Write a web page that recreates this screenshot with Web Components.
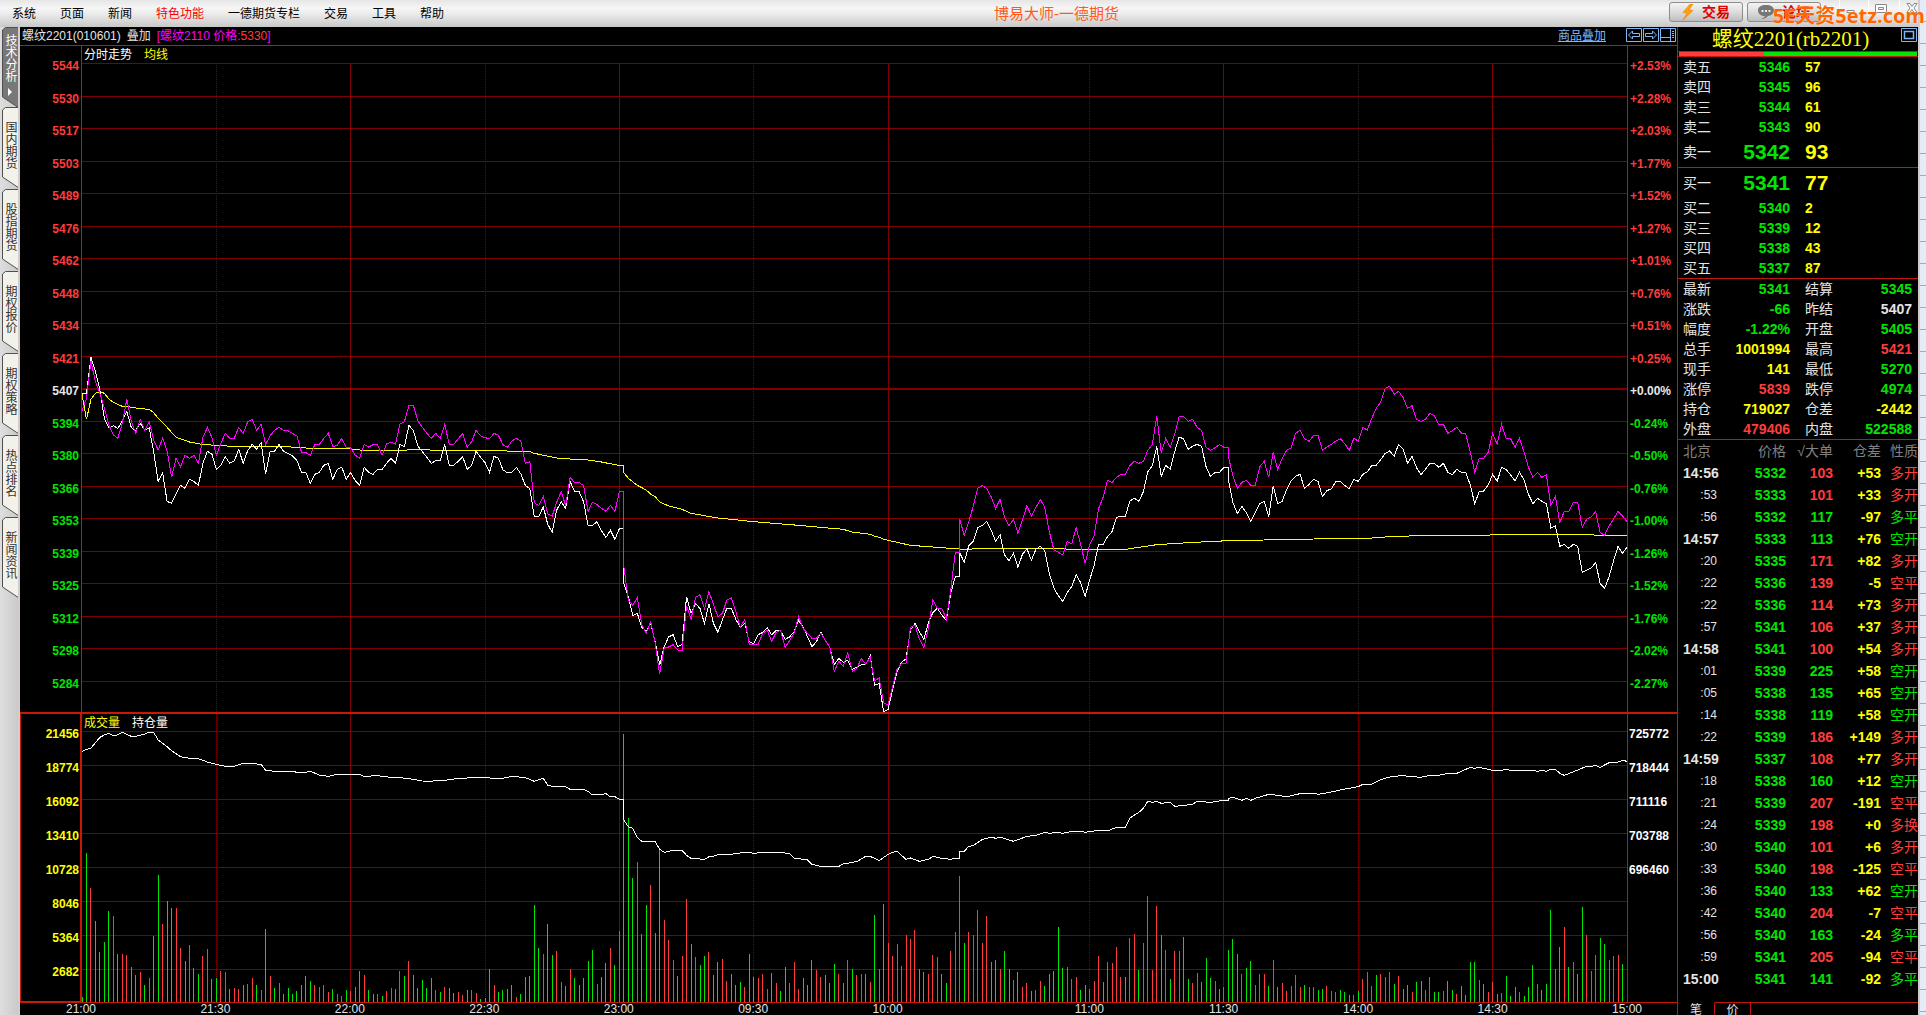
<!DOCTYPE html>
<html lang="zh-CN">
<head>
<meta charset="utf-8">
<title>博易大师-一德期货</title>
<style>
  body {
    margin: 0;
    background: #000;
    font: 12px/16px "Liberation Sans", "Noto Sans CJK SC", sans-serif;
  }
</style>
</head>
<body>
<trade-app></trade-app>

<script>
const RED = '#ff3c3c';
const GREEN = '#00e600';

const MARKS = [
  [0, '21:00'], [30, '21:30'], [60, '22:00'], [90, '22:30'], [120, '23:00'], [150, '09:30'],
  [180, '10:00'], [225, '11:00'], [255, '11:30'], [285, '14:00'], [315, '14:30'], [345, '15:00']
];
const DOTTED = [30, 90, 150, 225, 285];

// Each chunk: first minute, vertical offset, then one value per minute.
const LAST = [
  [0, 882, [160,160,52,95,150,235,264,257,265,243,214,262,272,250,271,264,335,424,398,484,490,462,436,445,418,425,436,370,334,342,
    388,375,350,370,363,328,370,332,313,328,308,402,335,334,313,334,340,348,362,396,398,430,403,397,376,370,418,388,381,418,
    397,422,436,382,397,403,388,388,370,355,370,313,320,256,272,318,335,352,370,362,361,313,376,376,364,350,388,376,334,352,
    368,397,349,355,390,398,397,382,402,436,446,530,530,500,553,577,510,485,505,425,454,455,485,556,556,545,572,592,571,598,566,566]],
  [121, 1062, [550,590,647,640,682,693,670,725,795,740,711,704,740,733,590,640,611,625,670,611,670,697,660,625,625,658,682,670,725,731,
    704,697,683,704,691,693,718,711,695,661,680,710,740,725,697,722,742,794,775,787,781,808,802,794,793,767,856,850,935,928,
    870,815,787,777,690,670,695,718,668,638,625,645,661,580,530,530]],
  [196, 1062, [458,487,438,424,383,377,364,390,424,404,465,482,460,502,463,446,481,448,439,452,520,563,587,604,577,560,524,548,589,540,497,433]],
  [228, 972, [523,500,485,443,438,438,393,385,394,365,305,287,229,319,286,298,245,201,207,238,229,223,229,290,320,307,307,292,292]],
  [256, 972, [330,398,430,409,428,455,428,401,394,440,347,401,394,358,333,319,313,356,343,328,334,380,362,356,334,334,347,356,328,334,
    313,306,286,286,269,250,243,259,223,237,280,259,293,314,298,280,280,292,280,307,314,298,307,307,345,401,365,363,345,313,
    334,292,298,315,333,307,330,373,401,385,394,401,474,467,529,523,535,523,529,607,600,594,577,640,655,620,572,529,550,532]]
];

const OVERLAY = [
  [0, 882, [212,175,63,125,160,205,255,285,295,250,178,243,280,238,271,244,300,330,295,333,412,355,380,346,355,346,370,292,262,292,
    346,310,280,295,295,262,280,245,238,271,253,313,287,271,262,271,272,280,288,336,338,346,313,313,295,280,320,316,295,322,
    324,345,355,313,321,314,314,346,312,306,313,252,245,196,196,243,262,280,295,280,295,253,313,313,297,280,322,305,271,288,
    293,296,280,286,314,322,303,295,303,370,365,488,497,469,522,528,487,455,497,412,428,428,436,514,487,494,505,514,496,514,455,455]],
  [121, 1062, [500,600,616,593,675,700,665,730,823,743,741,734,750,751,617,658,592,584,626,575,613,650,640,600,593,635,682,658,733,733,
    733,700,691,724,697,691,742,722,700,650,685,700,715,715,699,722,742,814,784,799,758,814,806,776,792,772,844,833,908,915,
    860,808,790,790,682,675,718,742,685,599,625,625,657,570,458,458]],
  [196, 1062, [358,406,365,320,265,257,265,290,325,298,350,377,358,400,360,317,348,323,298,323,395,449,457,465,425,432,383,434,490,435,407,326]],
  [228, 972, [382,331,338,322,313,313,287,274,280,274,241,223,139,248,205,232,193,139,139,154,148,172,181,232,241,233,224,232,232]],
  [256, 972, [260,318,355,337,331,346,346,290,274,322,247,298,265,241,234,190,181,206,214,196,196,241,231,223,213,206,222,241,205,213,
    172,180,145,115,97,55,48,73,64,83,115,107,148,154,148,130,138,163,163,190,182,172,189,192,245,307,266,265,247,190,
    223,163,205,206,232,205,245,292,322,307,322,314,406,379,457,424,424,397,397,472,448,441,424,488,496,468,447,424,438,455]]
];

// Slow lines: vertical offset, then minute,value pairs.
const AVERAGE = [
  [882, '0,162 1,238 2,178 3,160 4,155 5,160 6,177 7,187 9,199 10,199 12,204 14,207 15,208 16,218 17,235 19,262 21,292 24,306 26,311 27,314 32,317 33,320 46,320 48,323 52,325 60,327 62,330 66,331 72,331 74,328 77,328 78,331 94,331 96,335 100,335 101,340 106,354 110,358 112,358 116,366 119,374 120,376 121,376'],
  [1062, '121,218 122,235 124,256 126,270 127,283 128,290 129,306 131,318 134,328 136,340 142,354 150,365 160,376 170,388 172,396 176,403 177,409 178,412 179,418 181,424 185,436 190,441 194,445 196,447 198,448 200,445 219,445 220,448 227,448'],
  [972, '233,538 236,532 240,524 247,518 256,512 264,510 275,507 287,505 290,502 293,499 303,496 314,496 315,493 337,493 338,496 345,496']
];

const HOLDING = [
  [-42, '0,154 1,148 2,144 3,128 4,112 5,105 6,100 7,108 8,104 9,97 10,103 11,109 12,109 14,102 15,97 16,97 17,120 19,140 20,152 22,170 24,175 26,176 28,186 30,193 32,199 34,199 36,190 38,191 40,193 41,211 42,212 44,216 45,214 47,214 48,217 50,217 51,214 53,225 55,229 57,223 62,223 63,229 66,227 69,232 71,233 74,238 76,243 78,244 79,241 81,243 82,238 86,234 88,233 94,235 96,229 99,233 101,244 103,235 104,256 106,261 108,260 109,268 112,268 113,274 114,285 116,283 117,281 118,291 119,290 120,298 121,298'],
  [-42, '121,360 122,380 123,385 124,412 125,424 126,426 128,425 129,448 130,457 132,451 134,451 135,466 136,475 139,478 140,470 141,469 142,464 145,463 146,460 149,457 150,460 152,457 156,457 158,461 159,474 162,480 163,493 165,499 169,499 170,492 172,487 173,485 175,469 176,469 178,482 180,463 181,457 182,454 184,478 185,474 187,484 189,478 190,469 192,475 194,478 195,475 196,475'],
  [-42, '196,454 197,454 198,439 199,437 201,419 203,411 204,415 205,411 208,424 211,409 213,406 215,397 216,400 218,397 219,400 221,394 223,394 224,397 225,394 228,391 229,393 231,382 233,382 234,354 236,337 237,325 238,304 239,307 240,304 241,310 243,307 244,319 248,313 249,304 252,307 255,301 256,301'],
  [-42, '256,295 257,292 259,301 260,295 261,301 262,295 265,283 267,286 269,290 272,281 275,280 276,283 279,276 282,267 285,260 286,253 288,253 290,239 292,231 295,226 296,229 299,232 301,226 303,226 305,220 307,220 310,202 311,205 312,202 315,211 317,211 318,208 319,211 324,211 325,214 326,211 327,214 328,208 329,208 330,220 331,226 334,210 336,199 337,199 338,196 339,202 341,188 343,186 344,181 345,184']
];

// One bar per minute, negative when the price fell.
const VOLUME = [
  -12,-444,339,-240,-147,-177,-270,255,-141,141,138,-102,-78,87,-48,69,-195,-378,231,-300,-279,279,159,-120,168,-99,-81,135,156,-66,
  -69,90,87,-36,39,36,-48,51,69,-48,33,-216,75,-39,54,-21,-39,-21,-30,-48,-75,-60,48,42,48,27,-36,21,15,-33,
  30,-42,-90,78,-33,-21,21,-15,30,39,-36,90,-75,120,-78,-39,-63,-39,-69,33,-27,42,-39,-24,27,18,-33,33,24,-6,
  -9,-96,48,-27,-33,-36,-48,12,-21,-72,-75,-288,-159,141,-231,-138,150,57,-45,96,-69,-48,-69,-120,-153,51,-72,-114,159,-108,
  210,-801,-549,-369,417,-201,-288,348,-204,-459,243,183,123,-75,135,306,-171,132,-108,-135,147,-78,-117,126,60,-81,-48,-57,42,-141,
  -72,69,81,36,-84,54,-30,-102,54,117,36,-69,-48,-123,93,72,-78,-54,-111,81,-54,123,-96,78,81,-81,57,-258,96,-291,
  174,135,171,105,198,186,213,-96,-87,81,138,132,-81,-54,150,207,375,-174,207,198,273,174,255,-117,-123,96,-150,-96,63,-87,
  42,54,-30,33,60,-45,-81,-90,-222,-99,102,66,72,-33,-48,36,60,135,-57,117,114,162,72,-72,189,201,-93,174,315,93,
  285,-198,153,-66,150,150,-192,-66,54,84,-57,-129,-69,60,-36,42,-153,-186,-141,81,-99,-120,48,81,81,-45,123,-42,54,30,
  45,78,42,-48,42,42,-33,-36,45,30,27,-33,-27,-18,18,-30,66,87,45,-78,81,72,87,-51,75,-36,-48,27,-57,-60,
  33,72,-27,-27,30,-60,-33,21,-45,-18,-117,-117,63,-51,27,57,-21,24,-75,-15,-42,27,-15,-42,-108,51,-33,-51,-273,96,
  -162,222,-102,117,-81,-282,198,90,138,-189,-171,123,135,138,-111,156
];

function chunkPoints(chunks) {
  return chunks.map(([start, top, values]) =>
    values.map((v, i) => `${start + i},${top + v}`).join(' ')).join(' ');
}

function pairPoints(parts) {
  return parts.map(([top, text]) =>
    text.split(' ').map(p => {
      const [x, y] = p.split(',').map(Number);
      return `${x},${top + y}`;
    }).join(' ')).join(' ');
}

function verticals(height, top) {
  return MARKS.slice(1, -1).map(([m]) =>
    `<line x1="${m}" x2="${m}" y1="${top}" y2="${height}" class="${DOTTED.includes(m) ? 'grid dotted' : 'grid'}"/>`).join('');
}

const PLOT_CSS = `
  svg.plot {
    display: block;
    width: 100%;
    height: 0;
    min-height: 100%;
    overflow: hidden;
    shape-rendering: crispEdges;
  }
  .plot line, .plot path, .plot polyline {
    fill: none;
    stroke-width: 1px;
    vector-effect: non-scaling-stroke;
  }
  .plot .grid { stroke: #800000; }
  .plot .dotted { stroke-dasharray: 1 1; }
  .pane { display: grid; grid-template-columns: 61px 1fr 49px; grid-template-rows: 100%; height: 100%; }
  .frame { display: grid; grid-template: 100% / 100%; border: solid #c01810; border-width: 0 1px; min-width: 0; }
  .frame > * { grid-area: 1 / 1; }
  .legend { display: flex; gap: 12px; padding: 1px 2px 0; color: #fff; align-self: start; }
  .legend .y { color: #ff0; }
  .axis { font-weight: bold; box-sizing: border-box; display: grid; align-items: center; }
  .left { text-align: right; padding-right: 2px; }
  .right { padding-left: 2px; }
`;

class TopBar extends HTMLElement {
  constructor() {
    super();
    this.attachShadow({ mode: 'open' });
  }

  connectedCallback() {
    const items = ['系统', '页面', '新闻', '特色功能', '一德期货专栏', '交易', '工具', '帮助'];
    this.shadowRoot.innerHTML = `
      <style>
        :host {
          display: flex;
          align-items: center;
          position: relative;
          height: 27px;
          box-sizing: border-box;
          background: linear-gradient(#e6e6e6, #f6f6f6 30%, #ececec 50%, #c8c8c8);
          color: #000;
        }
        nav { display: flex; gap: 24px; padding-left: 12px; }
        button { font: inherit; padding: 0; border: 0; background: none; color: inherit; }
        nav .hot { color: #f00; }
        h1 { flex: 1; margin: 0; text-align: center; font-size: 15px; font-weight: normal; color: #ff5a1e; }
        .tools { display: flex; gap: 4px; align-self: start; padding-top: 2px; }
        .tools button {
          box-sizing: border-box;
          display: flex;
          align-items: center;
          justify-content: center;
          gap: 8px;
          width: 74px;
          height: 20px;
          border: 1px solid #8c8c8c;
          border-radius: 3px;
          background: linear-gradient(#f4f4f4, #dcdcdc 50%, #bdbdbd);
          color: #e00000;
          font-size: 14px;
          font-weight: bold;
        }
        .win { display: flex; gap: 12px; box-sizing: border-box; width: 97px; padding-left: 18px; align-self: start; }
        .win button { height: 16px; border-left: 1px solid #fff; padding-left: 6px; }
        .mark {
          position: absolute;
          right: -7px;
          top: 2px;
          font: bold 20px/28px "Open Sans", "Noto Sans CJK SC", sans-serif;
          color: #ff6600;
          text-shadow: 0 0 1px #fff;
        }
        svg { display: block; }
      </style>
      <nav>${items.map((t, i) => `<button${i === 3 ? ' class="hot"' : ''}>${t}</button>`).join('')}</nav>
      <h1>博易大师-一德期货</h1>
      <div class="tools">
        <button>
          <svg width="12" height="16" viewBox="0 0 12 16"><path d="M8 0L1 8.500L5 9L1 16L11 6.500L7 6L11 0Z" fill="#ffa010" stroke="#e07800" stroke-width=".5"/></svg>交易
        </button>
        <button>
          <svg width="16" height="14" viewBox="0 0 16 14"><path d="M8 0C3 0 0 2 0 5.500S3 11 7 11C6 13 4 13.500 3 14C7 14 9 12.500 10 11C14 10.500 16 8 16 5.500C16 2 13 0 8 0Z" fill="#777"/><path d="M3.500 5h2v2h-2zM7 5h2v2H7zM10.500 5h2v2h-2z" fill="#eee"/></svg>论坛
        </button>
      </div>
      <div class="win">
        <button aria-label="最小化"><svg width="10" height="14"><path d="M1 9.500h7v2H1z" fill="#fff" stroke="#888"/></svg></button>
        <button aria-label="最大化"><svg width="12" height="14"><path d="M.5 3.500h11v8H.500zM3.500 6.500h5v2h-5z" fill="#fff" fill-rule="evenodd" stroke="#888"/></svg></button>
        <button aria-label="关闭"><svg width="12" height="14"><path d="M1 2.500h3l2 3 2-3h3L8 7l3 4.500H8l-2-3-2 3H1L4 7z" fill="#fff" stroke="#888"/></svg></button>
      </div>
      <span class="mark">5E天资5etz.com</span>
    `;
  }
}
customElements.define('top-bar', TopBar);

class SideTabs extends HTMLElement {
  constructor() {
    super();
    this.attachShadow({ mode: 'open' });
  }

  connectedCallback() {
    const tabs = ['技术分析', '国内期货', '股指期货', '期权报价', '期权策略', '热点排名', '新闻资讯'];
    this.shadowRoot.innerHTML = `
      <style>
        :host {
          display: block;
          width: 20px;
          box-sizing: border-box;
          border-right: 2px solid #d4cccc;
          background: linear-gradient(90deg, #dedede, #cacaca);
        }
        button {
          display: grid;
          width: 18px;
          height: 82px;
          padding: 0;
          border: 0;
          background: none;
          color: #333;
          font: inherit;
          line-height: 14px;
        }
        button > * { grid-area: 1 / 1; }
        .label {
          display: flex;
          align-items: center;
          justify-content: center;
          gap: 6px;
          writing-mode: vertical-rl;
          padding: 0 0 6px 2px;
        }
        .on { color: #fff; height: 80px; }
        .on path { fill: #787878; }
        path { fill: #f2f2ea; stroke: #505050; }
        .on i {
          border: solid transparent;
          border-width: 4px 0 4px 4px;
          border-left-color: #fff;
        }
      </style>
      ${tabs.map((t, i) => `
        <button${i ? '' : ' class="on"'}>
          <svg width="18" height="82"><path d="M19 .5H5.500L2.500 3V70L19 81"/></svg>
          <span class="label">${t}${i ? '' : '<i></i>'}</span>
        </button>`).join('')}
    `;
  }
}
customElements.define('side-tabs', SideTabs);

class ChartHeader extends HTMLElement {
  constructor() {
    super();
    this.attachShadow({ mode: 'open' });
  }

  connectedCallback() {
    this.shadowRoot.innerHTML = `
      <style>
        :host {
          display: flex;
          align-items: center;
          gap: 6px;
          height: 18px;
          padding: 0 1px 0 2px;
          border-bottom: 1px solid #c01810;
          color: #e4e4e4;
        }
        .over { color: #f0f; }
        b { color: #ff3c3c; font-weight: normal; }
        a { margin-left: auto; margin-right: 14px; color: #7db8f5; }
        .icons { display: flex; gap: 1px; align-self: start; padding-top: 1px; }
        button { padding: 0; border: 0; background: none; }
        svg { display: block; fill: none; stroke: #7db8f5; }
      </style>
      <span>螺纹2201(010601)</span>
      <span>叠加</span>
      <span class="over">[螺纹2110 价格:<b>5330</b>]</span>
      <a href="#overlay">商品叠加</a>
      <div class="icons">
        <button aria-label="前一个"><svg width="16" height="14"><path d="M.5.5h15v13H.500zM2.500 7L6.500 3V5.500H13.500V8.500H6.500V11Z"/></svg></button>
        <button aria-label="后一个"><svg width="16" height="14"><path d="M.5.5h15v13H.500zM13.500 7L9.500 3V5.500H2.500V8.500H9.500V11Z"/></svg></button>
        <button aria-label="布局"><svg width="16" height="14"><path d="M.5.500h15v13H.500zM10.500 .5v13M.5 9.500h10M12 3.500h2M12 5.500h2M12 7.500h2M12 9.500h2"/></svg></button>
      </div>
    `;
  }
}
customElements.define('chart-header', ChartHeader);

class PriceChart extends HTMLElement {
  constructor() {
    super();
    this.attachShadow({ mode: 'open' });
  }

  connectedCallback() {
    const prices = [5544, 5530, 5517, 5503, 5489, 5476, 5462, 5448, 5434, 5421, 5407, 5394, 5380, 5366, 5353, 5339, 5325, 5312, 5298, 5284];
    const rates = ['+2.53', '+2.28', '+2.03', '+1.77', '+1.52', '+1.27', '+1.01', '+0.76', '+0.51', '+0.25', '+0.00',
      '-0.24', '-0.50', '-0.76', '-1.00', '-1.26', '-1.52', '-1.76', '-2.02', '-2.27'];
    const tone = i => i < 10 ? 'up' : i > 10 ? 'down' : 'flat';
    const rows = prices.map((p, i) => {
      const y = 52.5 + 97.5 * i;
      return `<line x1="0" x2="345" y1="${y}" y2="${y}" class="${i === 10 ? 'grid zero' : 'grid'}"/>`;
    }).join('');
    this.shadowRoot.innerHTML = `
      <style>
        ${PLOT_CSS}
        :host { display: block; min-height: 0; border-bottom: 2px solid #c81808; }
        .axis { grid-template-rows: repeat(20, 1fr); padding-top: 4px; padding-bottom: 12px; }
        .plot .zero { stroke-width: 2px; }
        .up { color: ${RED}; }
        .down { color: ${GREEN}; }
        .flat { color: #e8e8e8; }
      </style>
      <div class="pane">
        <div class="axis left">${prices.map((p, i) => `<span class="${tone(i)}">${p}</span>`).join('')}</div>
        <div class="frame">
          <svg class="plot" viewBox="0 0 345 1998" preserveAspectRatio="none">
            ${rows}${verticals(1998, 52)}
            <polyline points="${pairPoints(AVERAGE)}" stroke="#ff0"/>
            <polyline points="${chunkPoints(LAST)}" stroke="#fff"/>
            <polyline points="${chunkPoints(OVERLAY)}" stroke="#f0f"/>
          </svg>
          <div class="legend"><span>分时走势</span><span class="y">均线</span></div>
        </div>
        <div class="axis right">${rates.map((p, i) => `<span class="${tone(i)}">${p}%</span>`).join('')}</div>
      </div>
    `;
  }
}
customElements.define('price-chart', PriceChart);

class VolumeChart extends HTMLElement {
  constructor() {
    super();
    this.attachShadow({ mode: 'open' });
  }

  connectedCallback() {
    const volumes = [21456, 18774, 16092, 13410, 10728, 8046, 5364, 2682];
    const holdings = [725772, 718444, 711116, 703788, 696460];
    const bars = up => VOLUME.map((v, i) => (v > 0) === up ? `M${i} 864V${861 - Math.abs(v)}` : '').join('');
    const rows = volumes.map((v, i) => {
      const y = 52.5 + 102 * i;
      return `<line x1="0" x2="345" y1="${y}" y2="${y}" class="grid"/>`;
    }).join('');
    this.shadowRoot.innerHTML = `
      <style>
        ${PLOT_CSS}
        :host { display: block; height: 288px; border-bottom: 1px solid #c81808; }
        .axis { grid-auto-rows: 34px; padding-top: 3px; }
        .left { border: solid #c81808; border-width: 0 1px 1px; padding-right: 1px; color: #ff0; }
        .right { padding-left: 1px; color: #fff; }
      </style>
      <div class="pane">
        <div class="axis left">${volumes.map(v => `<span>${v}</span>`).join('')}</div>
        <div class="frame">
          <svg class="plot" viewBox="0 0 345 864" preserveAspectRatio="none">
            ${rows}${verticals(864, 0)}
            <path d="${bars(true)}" stroke="${RED}"/>
            <path d="${bars(false)}" stroke="${GREEN}"/>
            <polyline points="${pairPoints(HOLDING)}" stroke="#fff"/>
          </svg>
          <div class="legend"><span class="y">成交量</span><span>持仓量</span></div>
        </div>
        <div class="axis right">${holdings.map(v => `<span>${v}</span>`).join('')}</div>
      </div>
    `;
  }
}
customElements.define('volume-chart', VolumeChart);

class TimeAxis extends HTMLElement {
  constructor() {
    super();
    this.attachShadow({ mode: 'open' });
  }

  connectedCallback() {
    const cols = MARKS.slice(1).map(([m], i) => `${m - MARKS[i][0]}fr`).join(' ');
    this.shadowRoot.innerHTML = `
      <style>
        :host {
          display: grid;
          grid-template-columns: ${cols} 0;
          padding: 0 50px 0 61px;
          line-height: 12px;
          color: #e4e4e4;
        }
        span { justify-self: start; transform: translateX(-50%); }
      </style>
      ${MARKS.map(([, t]) => `<span>${t}</span>`).join('')}
    `;
  }
}
customElements.define('time-axis', TimeAxis);

class QuotePanel extends HTMLElement {
  constructor() {
    super();
    this.attachShadow({ mode: 'open' });
  }

  connectedCallback() {
    const asks = [['卖五', 5346, 57], ['卖四', 5345, 96], ['卖三', 5344, 61], ['卖二', 5343, 90], ['卖一', 5342, 93]];
    const bids = [['买一', 5341, 77], ['买二', 5340, 2], ['买三', 5339, 12], ['买四', 5338, 43], ['买五', 5337, 87]];
    const stats = [
      ['最新', '5341', 'g', '结算', '5345', 'g'],
      ['涨跌', '-66', 'g', '昨结', '5407', 'w'],
      ['幅度', '-1.22%', 'g', '开盘', '5405', 'g'],
      ['总手', '1001994', 'y', '最高', '5421', 'r'],
      ['现手', '141', 'y', '最低', '5270', 'g'],
      ['涨停', '5839', 'r', '跌停', '4974', 'g'],
      ['持仓', '719027', 'y', '仓差', '-2442', 'y'],
      ['外盘', '479406', 'r', '内盘', '522588', 'g']
    ];
    const ticks = [
      ['14:56', 5332, 103, '+53', '多开', 'r'], [':53', 5333, 101, '+33', '多开', 'r'],
      [':56', 5332, 117, '-97', '多平', 'g'], ['14:57', 5333, 113, '+76', '空开', 'g'],
      [':20', 5335, 171, '+82', '多开', 'r'], [':22', 5336, 139, '-5', '空平', 'r'],
      [':22', 5336, 114, '+73', '多开', 'r'], [':57', 5341, 106, '+37', '多开', 'r'],
      ['14:58', 5341, 100, '+54', '多开', 'r'], [':01', 5339, 225, '+58', '空开', 'g'],
      [':05', 5338, 135, '+65', '空开', 'g'], [':14', 5338, 119, '+58', '空开', 'g'],
      [':22', 5339, 186, '+149', '多开', 'r'], ['14:59', 5337, 108, '+77', '多开', 'r'],
      [':18', 5338, 160, '+12', '空开', 'g'], [':21', 5339, 207, '-191', '空平', 'r'],
      [':24', 5339, 198, '+0', '多换', 'r'], [':30', 5340, 101, '+6', '多开', 'r'],
      [':33', 5340, 198, '-125', '空平', 'r'], [':36', 5340, 133, '+62', '空开', 'g'],
      [':42', 5340, 204, '-7', '空平', 'r'], [':56', 5340, 163, '-24', '多平', 'g'],
      [':59', 5341, 205, '-94', '空平', 'r'], ['15:00', 5341, 141, '-92', '多平', 'g']
    ];
    const depth = (rows, best) => `
      <table class="depth">${rows.map((r, i) => `
        <tr${i === best ? ' class="best"' : ''}><th>${r[0]}</th><td class="g">${r[1]}</td><td class="y">${r[2]}</td></tr>`).join('')}
      </table>`;
    this.shadowRoot.innerHTML = `
      <style>
        :host {
          display: flex;
          flex-direction: column;
          box-sizing: border-box;
          width: 241px;
          min-height: 0;
          overflow: hidden;
          border-left: 1px solid #c01810;
          font-size: 14px;
          line-height: 20px;
          color: #e4e4e4;
        }
        header { display: flex; height: 24px; }
        h2 {
          flex: 1;
          margin: 0;
          padding-left: 2px;
          text-align: center;
          font: 21px/24px "Liberation Serif", "Noto Sans CJK SC", serif;
          color: #ff0;
        }
        header button { align-self: start; padding: 1px 1px 0 0; border: 0; background: none; }
        svg { display: block; fill: none; stroke: #7db8f5; }
        .ratio { display: flex; height: 4px; border: solid #c01810; border-width: 1px 0; padding: 0 1px; }
        .ratio i { flex: 85; background: ${RED}; }
        .ratio i + i { flex: 153; background: ${GREEN}; }
        table { border-collapse: collapse; table-layout: fixed; width: 100%; }
        th, td { padding: 0; height: 20px; font-weight: bold; text-align: right; white-space: nowrap; }
        th { font-weight: normal; text-align: left; }
        .depth, .stats { border-bottom: 1px solid #c01810; border-collapse: separate; border-spacing: 0; }
        .depth th { width: 35px; padding-left: 5px; }
        .depth td { width: 72px; }
        .depth .y { width: auto; padding-left: 15px; text-align: left; }
        .best td { height: 30px; font-size: 21px; }
        .stats th { width: 35px; padding-left: 5px; }
        .stats td { width: 72px; }
        .stats td + th { padding-left: 15px; }
        .stats td:last-child { width: auto; padding-right: 6px; }
        .ticks th, .ticks td { height: 22px; }
        .ticks thead th { color: #808080; text-align: right; }
        .ticks thead th:first-child, .ticks .full { padding: 0 0 0 5px; text-align: left; }
        .ticks td:first-child { color: #e4e4e4; }
        .ticks .sec { font-size: 12px; font-weight: normal; padding-right: 1px; }
        .ticks td:last-child { font-weight: normal; }
        .g { color: ${GREEN}; }
        .r { color: ${RED}; }
        .y { color: #ff0; }
        .w { color: #e4e4e4; }
        footer { display: flex; margin-top: auto; }
        footer button {
          box-sizing: border-box;
          width: 36px;
          padding: 0;
          border: solid #c01810;
          border-width: 1px 1px 0 0;
          background: none;
          color: #e4e4e4;
          font: 12px/12px "Noto Sans CJK SC", sans-serif;
        }
        footer button:first-child { width: 37px; border-top-color: transparent; }
        footer span { flex: 1; border-top: 1px solid #c01810; }
      </style>
      <header>
        <h2>螺纹2201(rb2201)</h2>
        <button aria-label="窗口"><svg width="16" height="14"><path d="M.5.5h15v13H.500z"/><path d="M3.500 3.500h9v7h-9z" stroke-width="1.500"/></svg></button>
      </header>
      <div class="ratio"><i></i><i></i></div>
      ${depth(asks, 4)}
      ${depth(bids, 0)}
      <table class="stats">${stats.map(r => `
        <tr><th>${r[0]}</th><td class="${r[2]}">${r[1]}</td><th>${r[3]}</th><td class="${r[5]}">${r[4]}</td></tr>`).join('')}
      </table>
      <table class="ticks">
        <colgroup><col style="width:40px"><col style="width:68px"><col style="width:47px"><col style="width:48px"><col></colgroup>
        <thead><tr><th>北京</th><th>价格</th><th>√大单</th><th>仓差</th><th>性质</th></tr></thead>
        <tbody>${ticks.map(r => `
          <tr><td class="${r[0].length > 3 ? 'full' : 'sec'}">${r[0]}</td><td class="g">${r[1]}</td><td class="${r[5]}">${r[2]}</td><td class="y">${r[3]}</td><td class="${r[5]}">${r[4]}</td></tr>`).join('')}
        </tbody>
      </table>
      <footer><button>笔</button><button>价</button><span></span></footer>
    `;
  }
}
customElements.define('quote-panel', QuotePanel);

class TradeApp extends HTMLElement {
  constructor() {
    super();
    this.attachShadow({ mode: 'open' });
  }

  connectedCallback() {
    this.shadowRoot.innerHTML = `
      <style>
        :host {
          display: grid;
          grid-template-columns: 20px minmax(0, 1fr) 241px 8px;
          grid-template-rows: 27px minmax(0, 1fr);
          height: 100vh;
          overflow: hidden;
        }
        top-bar { grid-column: 1 / 4; }
        main { display: grid; grid-template-rows: auto minmax(0, 1fr) auto auto; min-height: 0; }
        .edge {
          grid-column: 4;
          grid-row: 1 / 3;
          border-left: 2px solid #d4cccc;
          background: repeating-linear-gradient(#e4ecf8 0 21px, #8fb0d0 21px 22px);
        }
      </style>
      <top-bar></top-bar>
      <side-tabs></side-tabs>
      <main>
        <chart-header></chart-header>
        <price-chart></price-chart>
        <volume-chart></volume-chart>
        <time-axis></time-axis>
      </main>
      <quote-panel></quote-panel>
      <div class="edge"></div>
    `;
  }
}
customElements.define('trade-app', TradeApp);
</script>
</body>
</html>
